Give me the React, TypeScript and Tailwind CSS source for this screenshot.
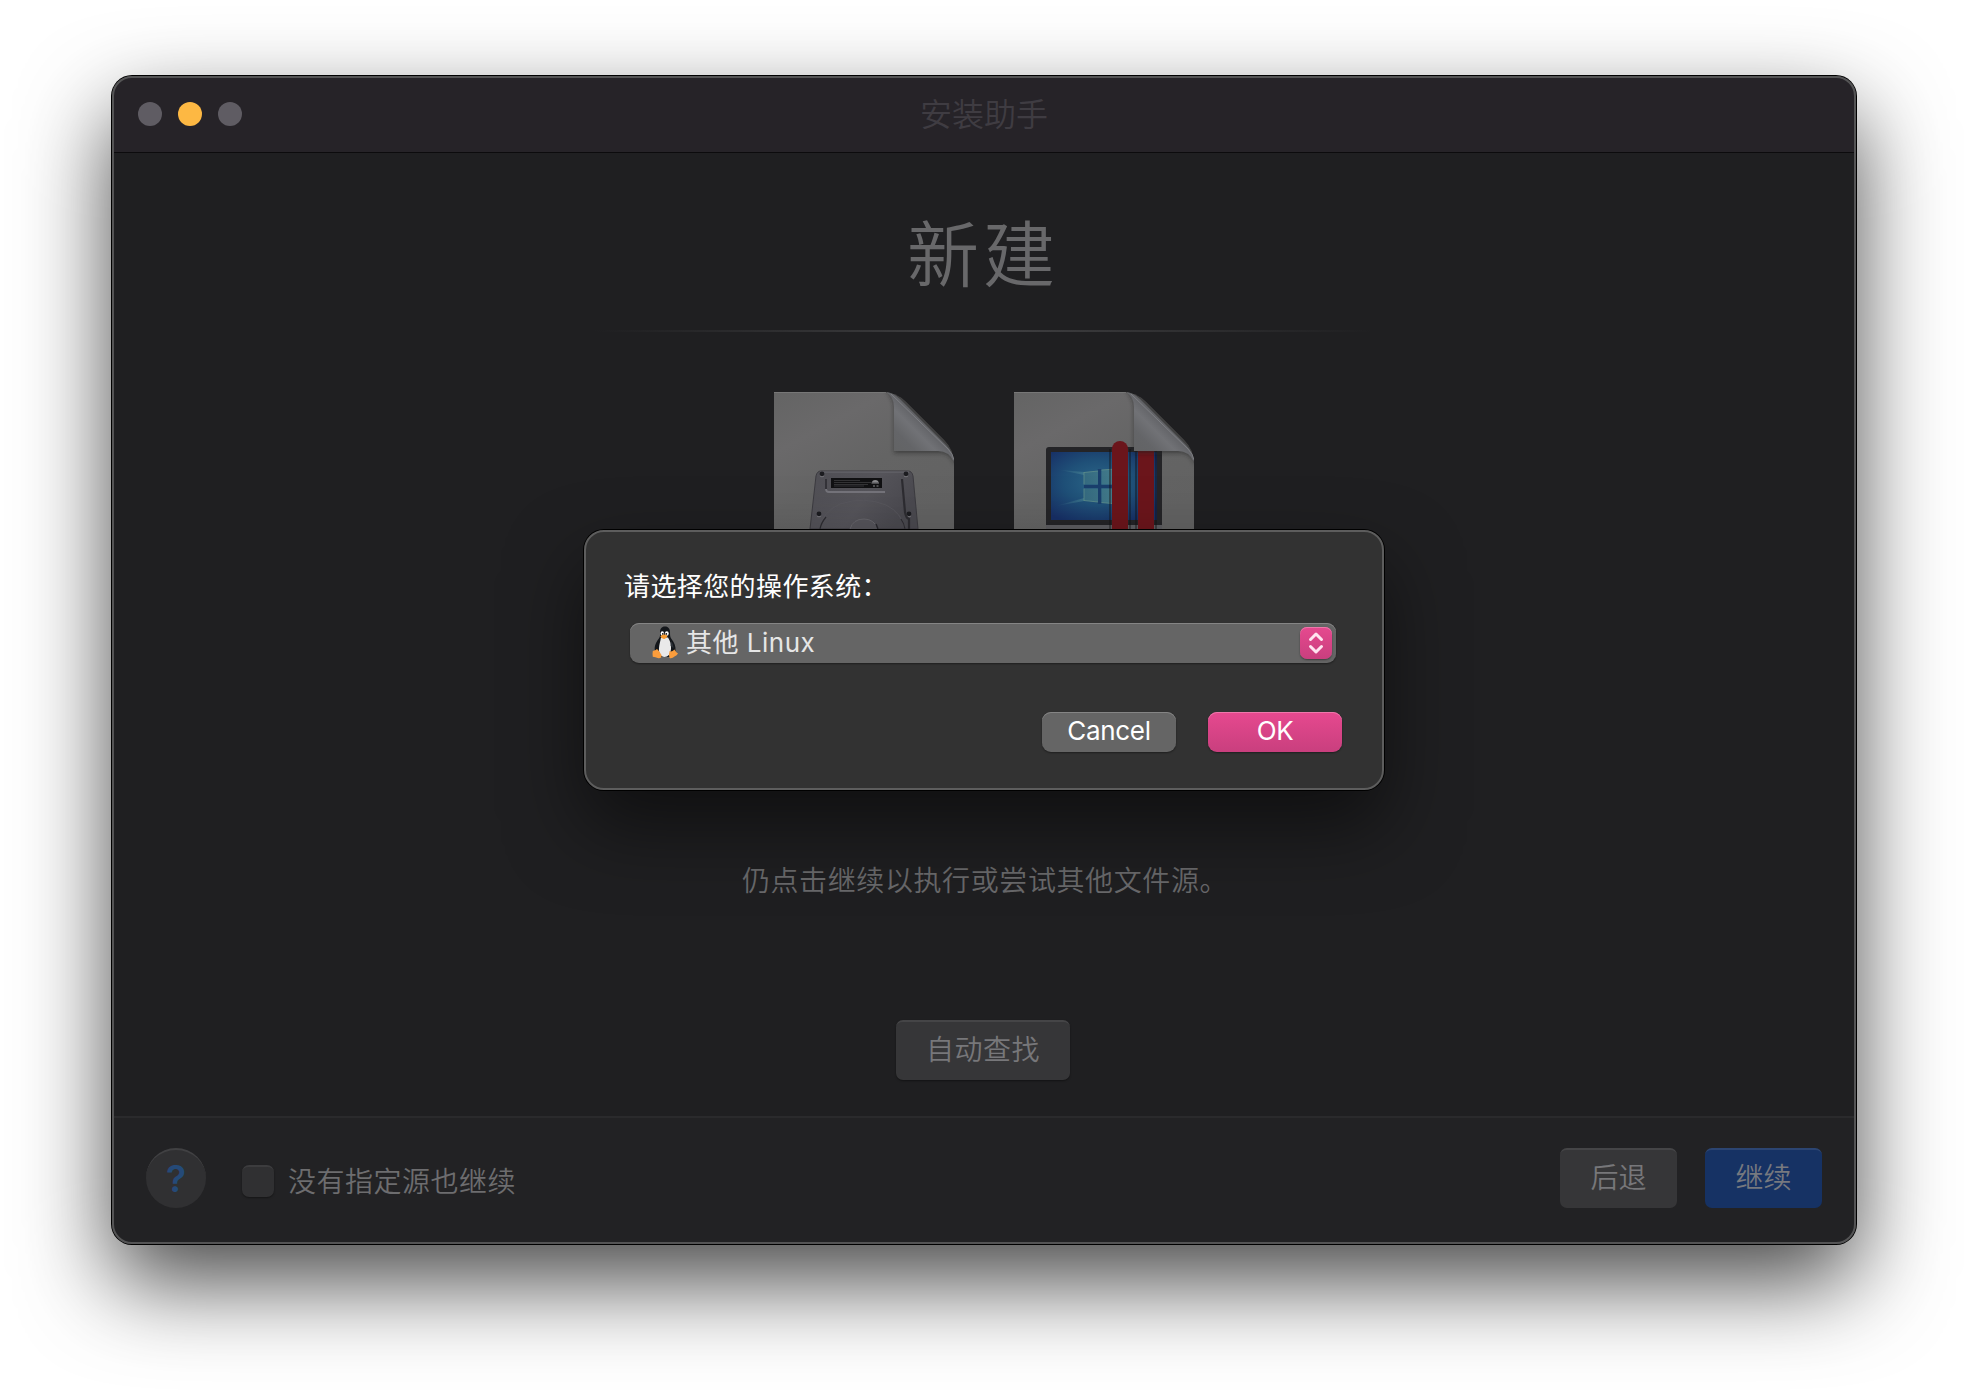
import React from "react";

const page = "M0 0H108Q122 0 132 10L170 48Q180 58 180 72V137H0Z";

function Paper({ id, children }: { id: string; children: React.ReactNode }) {
  return (
    <svg width="180" height="137" viewBox="0 0 180 137" className="block overflow-hidden">
      <defs>
        <linearGradient id={id + "p"} x1="0" y1="0" x2="0.7" y2="1">
          <stop offset="0" stopColor="#646464" />
          <stop offset="0.3" stopColor="#6a696a" />
          <stop offset="0.6" stopColor="#646464" />
          <stop offset="1" stopColor="#626262" />
        </linearGradient>
        <linearGradient id={id + "f"} gradientUnits="userSpaceOnUse" x1="118" y1="60" x2="149" y2="29">
          <stop offset="0" stopColor="#626364" />
          <stop offset="0.4" stopColor="#646568" />
          <stop offset="0.72" stopColor="#717276" />
          <stop offset="1" stopColor="#606165" />
        </linearGradient>
        <filter id={id + "b"} x="-20%" y="-20%" width="140%" height="140%">
          <feGaussianBlur stdDeviation="2" />
        </filter>
        <clipPath id={id + "c"}>
          <path d={page} />
        </clipPath>
      </defs>
      <path d={page} fill={`url(#${id}p)`} />
      <path d="M0 .5H112" stroke="#777" strokeWidth="1" />
      <g clipPath={`url(#${id}c)`}>
        {children}
        <path d="M112 -2Q119 6 120 14V61H168Q178 62 181 74V55L124 -2Z" fill="#222" opacity=".55" filter={`url(#${id}b)`} />
      </g>
      <path d="M112 0Q120 5 120 15V59H164Q175 59 180 70Q179 60 172 53L126 7Q120 1 112 0Z" fill={`url(#${id}f)`} />
      <path d="M117 2L174 57Q179 62 180 68" fill="none" stroke="#7d7e82" strokeWidth="1" />
    </svg>
  );
}

function DiskPage() {
  return (
    <Paper id="d">
      <defs>
        <linearGradient id="metal" x1="0" y1="0" x2="1" y2="0.4">
          <stop offset="0" stopColor="#504f55" />
          <stop offset="0.6" stopColor="#55545a" />
          <stop offset="1" stopColor="#4a494f" />
        </linearGradient>
      </defs>
      <path d="M36 137L42 84Q43 79 47 79H134Q138 79 139 84L144 137Z" fill="url(#metal)" stroke="#3c3b40" />
      <path d="M46 80H135" stroke="#6b6a70" strokeWidth="1.2" />
      {[[48, 82], [132, 82], [45, 122], [135, 122]].map(([x, y]) => (
        <g key={x + "-" + y}>
          <circle cx={x} cy={y} r="2.4" fill="#1c1c20" />
          <path d={`M${x - 2} ${y + 2}a3 3 0 0 0 4 0`} stroke="#77767b" fill="none" />
        </g>
      ))}
      <path d="M52 97Q52 100 55 100H111" stroke="#74737a" strokeWidth="1.8" fill="none" />
      <path d="M52 87V97" stroke="#2b2a2f" strokeWidth="1.5" />
      <rect x="57" y="86" width="51" height="10" fill="#111113" />
      <path d="M60 88.5H86M60 90.5H97M60 92.5H94M60 94H90" stroke="#4b4b4e" strokeWidth=".6" />
      <path d="M98 90.500a3.200 2.500 0 0 1 6.500 0Z" fill="#8a8a8d" />
      <path d="M97.500 91H105M99 94H101M102.500 94H104.500" stroke="#8a8a8d" strokeWidth="1.1" fill="none" />
      <path d="M128 87L131 120Q132 126 135 127V137" stroke="#2d2c31" strokeWidth="2.2" fill="none" />
      <path d="M46 137Q48 120 66 112Q90 104 112 113Q128 121 131 137" stroke="#59585e" strokeWidth=".8" fill="none" />
      <path d="M46 137Q47 131 52 125M131 137Q130 131 127 127" stroke="#2d2c31" strokeWidth="1.2" fill="none" />
      <path d="M76 137Q79 127 90 127Q100 127 104 137" stroke="#66656b" strokeWidth="1" fill="#55545a" />
      <path d="M102 132L104 137" stroke="#29282d" strokeWidth="1.5" />
    </Paper>
  );
}

function WindowsPage() {
  return (
    <Paper id="w">
      <defs>
        <radialGradient id="screen" cx=".45" cy=".45" r=".65">
          <stop offset="0" stopColor="#2b6688" />
          <stop offset=".5" stopColor="#1f5078" />
          <stop offset="1" stopColor="#172f65" />
        </radialGradient>
        <linearGradient id="pane" x1="0" y1="0" x2="1" y2="0">
          <stop offset="0" stopColor="#356a80" />
          <stop offset="1" stopColor="#437c8c" />
        </linearGradient>
        <linearGradient id="ray" x1="0" y1="0" x2="1" y2="0">
          <stop offset="0" stopColor="#4f8b98" stopOpacity="0" />
          <stop offset="1" stopColor="#4f8b98" stopOpacity=".5" />
        </linearGradient>
      </defs>
      <path d="M32 133H148V137H32Z" fill="#5c5c60" />
      <path d="M32 58Q32 55 35 55H145Q148 55 148 58V133H32Z" fill="#242427" />
      <rect x="37" y="60" width="106" height="68" fill="url(#screen)" />
      <path d="M70 80L46 78L70 83ZM70 109L42 114L70 106Z" fill="url(#ray)" />
      <path d="M85.500 77V112M70 94.500H98" stroke="#1a3f6c" strokeWidth="3.500" />
      <path d="M70 80.500L84 79V92.500H70ZM87.500 78L102 77V92.500H87.500ZM70 96.500H84V110L70 108.500ZM87.500 96.500H102V112L87.500 110.500Z" fill="url(#pane)" />
      <path d="M70 80.500L84 79M87.500 78L102 77M70 108.500L84 110M87.500 110.500L102 112M70 80V92.500M70 96.500V109" fill="none" stroke="#5f8f8c" strokeWidth=".8" />
      <path d="M96 57V137M122 57V137M116 57V137M142 57V137" stroke="#111" strokeWidth="2" opacity=".4" />
      <path d="M98 137V57a8 8 0 0 1 16 0V137Z" fill="#6b151b" />
      <path d="M124 137V52H140V137Z" fill="#6b151b" />
    </Paper>
  );
}

function Penguin() {
  return (
    <svg width="26" height="33" viewBox="0 0 26 33" className="block">
      <path d="M13 .5C9.500 .5 8 3 8 6C8 9 8.500 10.500 6.500 13C4 16.500 2 20 3 25L7 31H20L23.500 25C24 20 22 16 19.500 13C18 11 18 9 18 6C18 3 16.500 .5 13 .5Z" fill="#14171b" />
      <path d="M9 11.500H16C18 15 19.500 18 19 23C18.500 28 16 31 12.500 31C8.500 31 6.500 27 7 22C7.300 18 8.500 15 9 11.500Z" fill="#e9e9e9" />
      <ellipse cx="10.300" cy="7.500" rx="1.700" ry="2.300" fill="#fff" />
      <ellipse cx="14.800" cy="7.500" rx="1.900" ry="2.300" fill="#fff" />
      <circle cx="10.800" cy="7.900" r=".9" fill="#111" />
      <circle cx="14.300" cy="7.900" r=".9" fill="#111" />
      <path d="M8.300 10.200Q11.500 7 15.500 9.800Q15.500 11.500 12.500 13Q10 13.500 8.300 10.200Z" fill="#f99b2f" />
      <path d="M19 15Q21.500 18 21.500 22L18.500 20Z" fill="#2d3238" />
      <path d="M.8 25Q3.500 24.500 5 23Q7 24.500 9.500 29Q10 32.500 6.500 32.300Q3 31 .8 30.800Q.2 29 .8 25ZM17.500 25Q19.500 26.500 22.500 23.500Q23.500 26 26 27.500Q25 29.500 22.500 30.500Q20 33 17.500 32Q16.500 29 17.500 25Z" fill="#fb9d3c" />
    </svg>
  );
}

export default function App() {
  return (
    <div className="relative h-[1392px] w-[1968px] overflow-hidden bg-white px-28 pt-[76px] font-['Inter','Noto_Sans_CJK_SC',sans-serif]">
      <div className="flex h-[1168px] w-[1744px] flex-col overflow-hidden rounded-[20px] bg-[#1f1f21] shadow-[0_0_0_1px_#000,0_38px_90px_rgba(0,0,0,0.72)]">
        <header className="grid h-[77px] shrink-0 grid-cols-3 items-center border-b border-[#0c0b0d] bg-[#262328] px-[26px]">
          <div className="flex gap-4">
            <span className="size-6 rounded-full bg-[#5f5c63]" />
            <span className="size-6 rounded-full bg-[#fdb843]" />
            <span className="size-6 rounded-full bg-[#5f5c63]" />
          </div>
          <h1 className="pt-0.5 text-center text-[32px] leading-10 font-[350] text-[#3f3c42]">安装助手</h1>
        </header>
        <main className="flex h-[963px] shrink-0 flex-col items-center">
          <h2 className="mt-[50px] mr-0.5 h-[104px] text-[72px] leading-[104px] font-[350] tracking-[4px] text-[#68686a]">新建</h2>
          <div className="mt-[23px] h-[2px] w-[780px] bg-linear-to-r from-transparent via-[#404042] to-transparent" />
          <div className="mt-[60px] flex gap-[60px]">
            <DiskPage />
            <WindowsPage />
          </div>
          <p className="mt-[332px] ml-0.5 text-[28px] leading-10 font-[350] tracking-[0.6px] text-[#69696b]">仍点击继续以执行或尝试其他文件源。</p>
          <button className="mt-[119px] mr-0.5 h-[60px] w-[174px] rounded-[7px] border-t-2 border-[#454547] bg-[#363638] pb-0.5 text-[28px] leading-10 font-[350] tracking-[0.5px] text-[#77777a] shadow-[0_1px_2px_rgba(0,0,0,0.4)]">自动查找</button>
        </main>
        <footer className="flex flex-1 items-start border-t-2 border-[#2a2a2c] bg-[#222224] px-[34px] pt-[30px]">
          <button className="flex size-[60px] items-center justify-center rounded-full border-t-2 border-[#414143] bg-[#303032] text-[37px] font-semibold text-[#254a78]">?</button>
          <label className="ml-9 flex h-[66px] items-center gap-[14px] text-[28px] font-[350] tracking-[0.5px] text-[#6d6d6f]">
            <span className="size-8 rounded-[7px] border-t-2 border-[#3c3c3e] bg-[#303032] shadow-[0_1px_2px_rgba(0,0,0,0.4)]" />
            <span className="pt-0.5">没有指定源也继续</span>
          </label>
          <button className="ml-auto h-[60px] w-[117px] rounded-[7px] border-t-2 border-[#454547] bg-[#363638] pb-0.5 text-[28px] leading-10 font-[350] text-[#77777a]">后退</button>
          <button className="ml-7 h-[60px] w-[117px] rounded-[7px] border-t-2 border-[#2c4572] bg-[#163264] pb-0.5 text-[28px] leading-10 font-[350] text-[#77797f]">继续</button>
        </footer>
      </div>
      <div className="pointer-events-none absolute top-[76px] left-28 h-[1168px] w-[1744px] rounded-[20px] border-2 border-[#545455]" />
      <div role="dialog" className="absolute top-[530px] left-[584px] h-[260px] w-[800px] rounded-[20px] border-2 border-[#5d5d5d] bg-[#323232] shadow-[0_0_0_1px_#000,0_36px_76px_rgba(0,0,0,0.5)]">
        <p className="mt-[35px] ml-[38px] text-[26px] leading-10 tracking-[0.4px] text-white">请选择您的操作系统：</p>
        <div className="mt-4 ml-11 flex h-10 w-[706px] items-center rounded-[9px] bg-[#656565] pr-1 pl-[22px] shadow-[inset_0_1px_0_#858585,0_1px_2px_rgba(0,0,0,0.4)]">
          <div className="-mt-0.5"><Penguin /></div>
          <span className="ml-2 text-[26px] leading-10 tracking-[0.5px] text-[#e6e6e6]">其他 Linux</span>
          <span className="ml-auto flex size-8 items-center justify-center rounded-[7px] bg-linear-to-b from-[#e6498f] to-[#c93f7e] shadow-[inset_0_1px_0_#ee78ab,0_1px_2px_rgba(0,0,0,0.4)]">
            <svg width="16" height="24" viewBox="0 0 16 24" fill="none" stroke="#ffe4f0" strokeWidth="3" strokeLinecap="round" strokeLinejoin="round">
              <path d="M2.500 8.500L8 3L13.500 8.500M2.500 15.500L8 21L13.500 15.500" />
            </svg>
          </span>
        </div>
        <div className="mt-[49px] flex justify-end gap-8 pr-10">
          <button className="h-10 w-[134px] rounded-[9px] bg-[#656565] pb-0.5 text-[26px] leading-[36px] tracking-[-0.3px] text-white shadow-[inset_0_1px_0_#858585,0_1px_2px_rgba(0,0,0,0.4)]">Cancel</button>
          <button className="h-10 w-[134px] rounded-[9px] bg-linear-to-b from-[#e6498f] to-[#c93f7e] pb-0.5 text-[26px] leading-[36px] tracking-[-0.3px] text-white shadow-[inset_0_1px_0_#ee78ab,0_1px_2px_rgba(0,0,0,0.4)]">OK</button>
        </div>
      </div>
    </div>
  );
}
